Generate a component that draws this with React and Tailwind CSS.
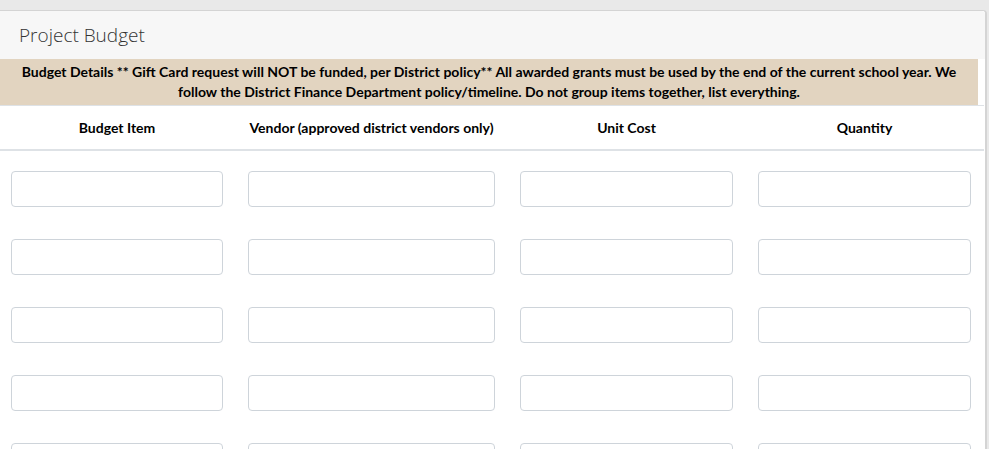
import React from 'react';

const columns = [
  'Budget Item',
  'Vendor (approved district vendors only)',
  'Unit Cost',
  'Quantity',
];

const rows = [0, 1, 2, 3, 4];

const App = () => {
  return (
    <div className="h-[449px] overflow-hidden bg-[#e9e9e9] pt-[10px] pr-[2px]" style={{ fontFamily: '"Open Sans", "Noto Sans", sans-serif' }}>
      <div className="h-[460px] w-[987px] rounded-tr-[4px] border-r-[2px] border-t border-[#d4d4d4] bg-white">
        <div className="flex h-[48px] items-center rounded-tr-[4px] bg-[#f7f7f7] px-[19px]">
          <h3 className="text-[19px] font-light text-[#333]">Project Budget</h3>
        </div>

        <div
          className="w-[978px] bg-[#e2d4c0] px-4 py-[3px] text-center text-[14px] font-bold leading-[20px] text-black"
          style={{ fontFamily: 'Lato, "Open Sans", sans-serif' }}
        >
          Budget Details ** Gift Card request will NOT be funded, per District policy** All awarded grants must be used by the end of the current school year. We follow the District Finance Department policy/timeline. Do not group items together, list everything.
        </div>

        <div className="w-[984px]" style={{ fontFamily: 'Lato, "Open Sans", sans-serif' }}>
          <div className="grid h-[46px] grid-cols-[212px_247px_213px_213px] items-center gap-x-[25px] border-b-2 border-t border-[#dee2e6] px-[11px]">
            {columns.map((c) => (
              <div key={c} className="whitespace-nowrap text-center text-[14px] font-bold text-black">
                {c}
              </div>
            ))}
          </div>

          {rows.map((r) => (
            <div key={r} className="grid h-[68px] grid-cols-[212px_247px_213px_213px] gap-x-[25px] px-[11px] pt-[20px]">
              {columns.map((c) => (
                <input
                  key={c}
                  type="text"
                  className="h-[36px] w-full rounded-[4px] border border-[#ced4da] bg-white px-3 text-sm outline-none"
                />
              ))}
            </div>
          ))}
        </div>
      </div>
    </div>
  );
};

export default App;
